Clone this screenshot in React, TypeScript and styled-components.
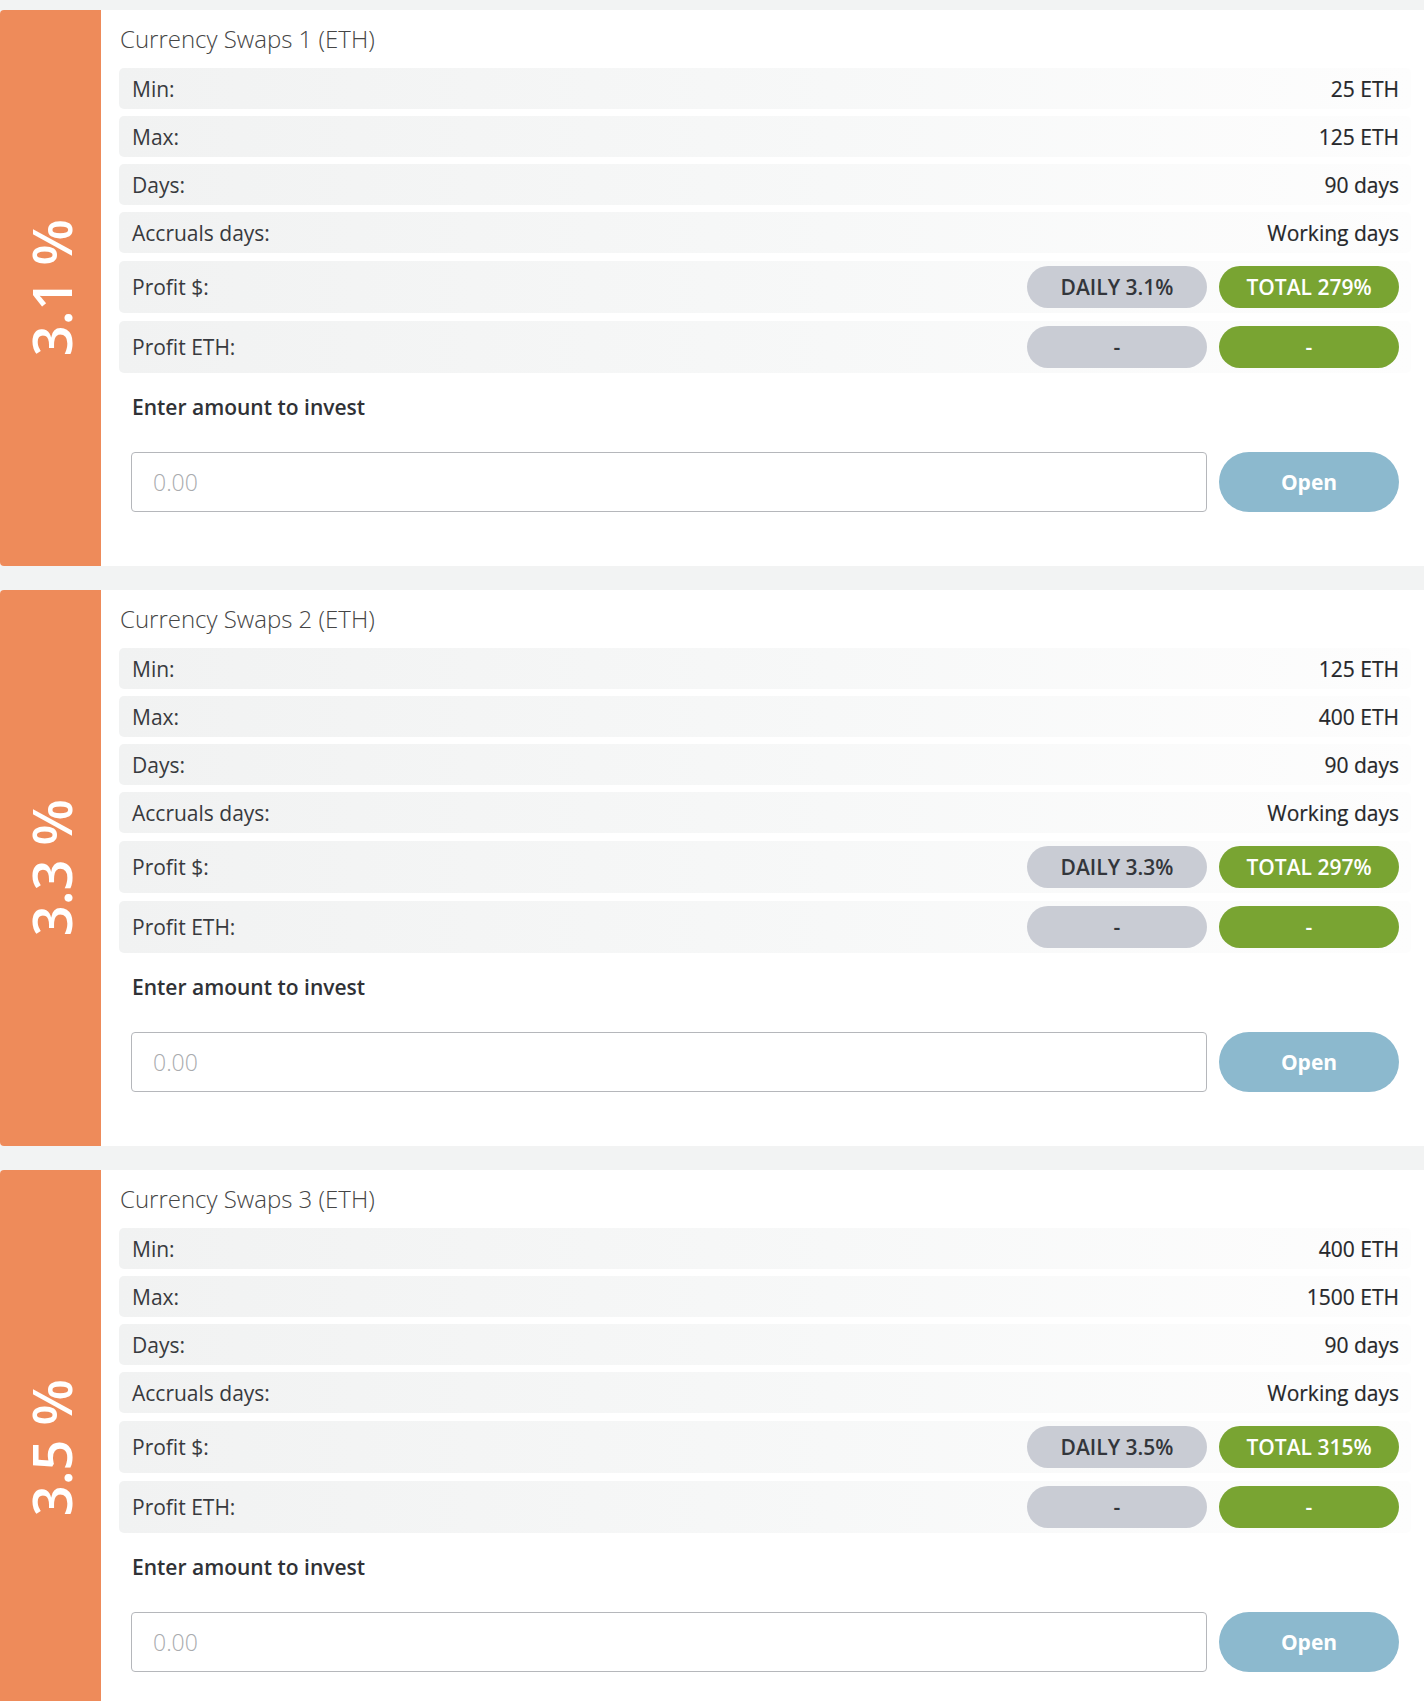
import React from "react";
import styled, { createGlobalStyle } from "styled-components";

const GlobalStyle = createGlobalStyle`
  html, body {
    margin: 0;
    padding: 0;
    background: #f2f3f3;
    font-family: "Open Sans", "Noto Sans", Arial, sans-serif;
  }
  * { box-sizing: border-box; }
`;

const Page = styled.div`
  display: flex;
  flex-direction: column;
  gap: 24px;
  padding-top: 10px;
`;

const Card = styled.section`
  display: grid;
  grid-template-columns: 101px 1fr;
  background: #ffffff;
  border-radius: 4px 0 0 4px;
  min-height: 556px;
`;

const RateBar = styled.div`
  background: #ee8b5a;
  border-radius: 4px 0 0 4px;
  display: flex;
  align-items: center;
  justify-content: center;
`;

const RateText = styled.span`
  writing-mode: vertical-rl;
  transform: rotate(180deg);
  color: #ffffff;
  font-size: 54px;
  font-weight: 600;
  line-height: 1;
  white-space: nowrap;
`;

const Content = styled.div`
  padding: 13px 13px 54px 18px;
  display: flex;
  flex-direction: column;
`;

const Title = styled.h2`
  margin: 0 0 13px 1px;
  font-size: 24px;
  line-height: 32px;
  font-weight: 300;
  color: #454545;
`;

const Rows = styled.div`
  display: flex;
  flex-direction: column;
  gap: 7px;
`;

const Row = styled.div<{ $tall?: boolean }>`
  display: flex;
  align-items: center;
  justify-content: space-between;
  min-height: ${(p) => (p.$tall ? "52px" : "41px")};
  margin-top: ${(p) => (p.$tall ? "1px" : "0")};
  padding: 0 12px 0 13px;
  border-radius: 5px;
  background: linear-gradient(to right, #f1f2f2 0%, #f7f8f8 55%, #fdfdfd 100%);
  font-size: 21px;
  color: #383a3e;
`;

const Label = styled.span`
  font-weight: 400;
`;

const Value = styled.span`
  font-weight: 400;
  color: #26282b;
  -webkit-text-stroke: 0.2px #26282b;
`;

const Badges = styled.div`
  display: flex;
  gap: 12px;
`;

const Badge = styled.span<{ $variant: "daily" | "total" }>`
  width: 180px;
  height: 42px;
  border-radius: 21px;
  display: flex;
  align-items: center;
  justify-content: center;
  font-size: 21px;
  font-weight: 600;
  background: ${(p) => (p.$variant === "daily" ? "#c9ccd4" : "#79a432")};
  color: ${(p) => (p.$variant === "daily" ? "#33363b" : "#ffffff")};
`;

const InvestLabel = styled.div`
  margin: 20px 0 0 13px;
  font-size: 21px;
  line-height: 28px;
  font-weight: 600;
  color: #303236;
`;

const InvestRow = styled.div`
  display: flex;
  gap: 12px;
  margin: 31px 12px 0 12px;
`;

const AmountInput = styled.input`
  flex: 1;
  height: 60px;
  border: 1px solid #b5b7bb;
  border-radius: 4px;
  padding: 0 21px;
  font-family: inherit;
  font-size: 23px;
  font-weight: 300;
  color: #333;
  background: #fff;
  outline: none;
  &::placeholder {
    color: #a9abae;
  }
`;

const OpenButton = styled.button`
  width: 180px;
  height: 60px;
  border: none;
  border-radius: 30px;
  background: #8cb9ce;
  color: #ffffff;
  font-family: inherit;
  font-size: 21px;
  font-weight: 700;
  cursor: pointer;
`;

type Plan = {
  rate: string;
  name: string;
  min: string;
  max: string;
  daily: string;
  total: string;
};

const plans: Plan[] = [
  { rate: "3.1 %", name: "Currency Swaps 1 (ETH)", min: "25 ETH", max: "125 ETH", daily: "DAILY 3.1%", total: "TOTAL 279%" },
  { rate: "3.3 %", name: "Currency Swaps 2 (ETH)", min: "125 ETH", max: "400 ETH", daily: "DAILY 3.3%", total: "TOTAL 297%" },
  { rate: "3.5 %", name: "Currency Swaps 3 (ETH)", min: "400 ETH", max: "1500 ETH", daily: "DAILY 3.5%", total: "TOTAL 315%" },
];

const PlanCard: React.FC<{ plan: Plan }> = ({ plan }) => (
  <Card>
    <RateBar>
      <RateText>{plan.rate}</RateText>
    </RateBar>
    <Content>
      <Title>{plan.name}</Title>
      <Rows>
        <Row>
          <Label>Min:</Label>
          <Value>{plan.min}</Value>
        </Row>
        <Row>
          <Label>Max:</Label>
          <Value>{plan.max}</Value>
        </Row>
        <Row>
          <Label>Days:</Label>
          <Value>90 days</Value>
        </Row>
        <Row>
          <Label>Accruals days:</Label>
          <Value>Working days</Value>
        </Row>
        <Row $tall>
          <Label>Profit $:</Label>
          <Badges>
            <Badge $variant="daily">{plan.daily}</Badge>
            <Badge $variant="total">{plan.total}</Badge>
          </Badges>
        </Row>
        <Row $tall>
          <Label>Profit ETH:</Label>
          <Badges>
            <Badge $variant="daily">-</Badge>
            <Badge $variant="total">-</Badge>
          </Badges>
        </Row>
      </Rows>
      <InvestLabel>Enter amount to invest</InvestLabel>
      <InvestRow>
        <AmountInput placeholder="0.00" />
        <OpenButton>Open</OpenButton>
      </InvestRow>
    </Content>
  </Card>
);

export default function App() {
  return (
    <>
      <GlobalStyle />
      <Page>
        {plans.map((p) => (
          <PlanCard key={p.name} plan={p} />
        ))}
      </Page>
    </>
  );
}
